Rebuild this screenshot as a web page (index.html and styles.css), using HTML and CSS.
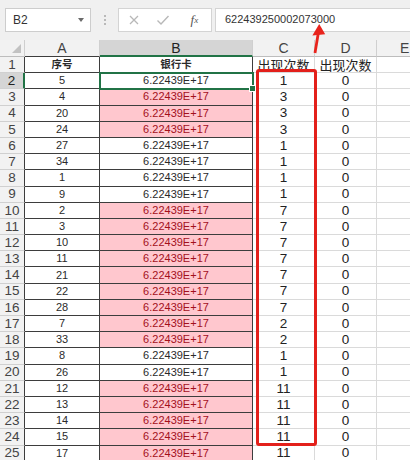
FILE: index.html
```html
<!DOCTYPE html>
<html lang="zh">
<head>
<meta charset="utf-8">
<link rel="stylesheet" href="styles.css">
</head>
<body>
<div class="toolbar">
  <div class="namebox"><span>B2</span><span class="caret"></span></div>
  <div class="sep"><i></i><i></i><i></i></div>
  <div class="fbtns">
    <span class="btn"><svg width="12" height="12" viewBox="0 0 12 12"><path d="M2 2L10 10M10 2L2 10" stroke="#b8b8b8" stroke-width="1.3" fill="none"/></svg></span>
    <span class="btn"><svg width="14" height="12" viewBox="0 0 14 12"><path d="M1.5 6.5L5 10L12.5 2" stroke="#b8b8b8" stroke-width="1.4" fill="none"/></svg></span>
    <span class="btn fx">f<sub>x</sub></span>
  </div>
  <div class="fbar">622439250002073000</div>
</div>

<div class="sheet">
  <div class="c corner"><span class="tri"></span></div>
  <div class="c ch cha">A</div>
  <div class="c ch sel">B</div>
  <div class="c ch">C</div>
  <div class="c ch">D</div>
  <div class="c ch che">E</div>

  <div class="c rh">1</div><div class="c a hd">序号</div><div class="c b hd">银行卡</div><div class="c cc cjk">出现次数</div><div class="c dd cjk">出现次数</div><div class="c ee"></div>
  <div class="c rh rsel">2</div><div class="c a">5</div><div class="c b active">6.22439E+17</div><div class="c cc">1</div><div class="c dd">0</div><div class="c ee"></div>
  <div class="c rh">3</div><div class="c a">4</div><div class="c b pk">6.22439E+17</div><div class="c cc">3</div><div class="c dd">0</div><div class="c ee"></div>
  <div class="c rh">4</div><div class="c a">20</div><div class="c b pk">6.22439E+17</div><div class="c cc">3</div><div class="c dd">0</div><div class="c ee"></div>
  <div class="c rh">5</div><div class="c a">24</div><div class="c b pk">6.22439E+17</div><div class="c cc">3</div><div class="c dd">0</div><div class="c ee"></div>
  <div class="c rh">6</div><div class="c a">27</div><div class="c b">6.22439E+17</div><div class="c cc">1</div><div class="c dd">0</div><div class="c ee"></div>
  <div class="c rh">7</div><div class="c a">34</div><div class="c b">6.22439E+17</div><div class="c cc">1</div><div class="c dd">0</div><div class="c ee"></div>
  <div class="c rh">8</div><div class="c a">1</div><div class="c b">6.22439E+17</div><div class="c cc">1</div><div class="c dd">0</div><div class="c ee"></div>
  <div class="c rh">9</div><div class="c a">9</div><div class="c b">6.22439E+17</div><div class="c cc">1</div><div class="c dd">0</div><div class="c ee"></div>
  <div class="c rh">10</div><div class="c a">2</div><div class="c b pk">6.22439E+17</div><div class="c cc">7</div><div class="c dd">0</div><div class="c ee"></div>
  <div class="c rh">11</div><div class="c a">3</div><div class="c b pk">6.22439E+17</div><div class="c cc">7</div><div class="c dd">0</div><div class="c ee"></div>
  <div class="c rh">12</div><div class="c a">10</div><div class="c b pk">6.22439E+17</div><div class="c cc">7</div><div class="c dd">0</div><div class="c ee"></div>
  <div class="c rh">13</div><div class="c a">11</div><div class="c b pk">6.22439E+17</div><div class="c cc">7</div><div class="c dd">0</div><div class="c ee"></div>
  <div class="c rh">14</div><div class="c a">21</div><div class="c b pk">6.22439E+17</div><div class="c cc">7</div><div class="c dd">0</div><div class="c ee"></div>
  <div class="c rh">15</div><div class="c a">22</div><div class="c b pk">6.22439E+17</div><div class="c cc">7</div><div class="c dd">0</div><div class="c ee"></div>
  <div class="c rh">16</div><div class="c a">28</div><div class="c b pk">6.22439E+17</div><div class="c cc">7</div><div class="c dd">0</div><div class="c ee"></div>
  <div class="c rh">17</div><div class="c a">7</div><div class="c b pk">6.22439E+17</div><div class="c cc">2</div><div class="c dd">0</div><div class="c ee"></div>
  <div class="c rh">18</div><div class="c a">33</div><div class="c b pk">6.22439E+17</div><div class="c cc">2</div><div class="c dd">0</div><div class="c ee"></div>
  <div class="c rh">19</div><div class="c a">8</div><div class="c b">6.22439E+17</div><div class="c cc">1</div><div class="c dd">0</div><div class="c ee"></div>
  <div class="c rh">20</div><div class="c a">26</div><div class="c b">6.22439E+17</div><div class="c cc">1</div><div class="c dd">0</div><div class="c ee"></div>
  <div class="c rh">21</div><div class="c a">12</div><div class="c b pk">6.22439E+17</div><div class="c cc">11</div><div class="c dd">0</div><div class="c ee"></div>
  <div class="c rh">22</div><div class="c a">13</div><div class="c b pk">6.22439E+17</div><div class="c cc">11</div><div class="c dd">0</div><div class="c ee"></div>
  <div class="c rh">23</div><div class="c a">14</div><div class="c b pk">6.22439E+17</div><div class="c cc">11</div><div class="c dd">0</div><div class="c ee"></div>
  <div class="c rh">24</div><div class="c a">15</div><div class="c b pk">6.22439E+17</div><div class="c cc">11</div><div class="c dd">0</div><div class="c ee"></div>
  <div class="c rh">25</div><div class="c a">17</div><div class="c b pk">6.22439E+17</div><div class="c cc">11</div><div class="c dd">0</div><div class="c ee"></div>
</div>

<div class="redbox"></div>
<svg class="arrow" width="30" height="40" viewBox="0 0 30 40">
  <path d="M10 33L13.3 13" stroke="#e8231c" stroke-width="2.8" fill="none"/>
  <path d="M14.2 4L7.4 15.6L20.2 14.2Z" fill="#e8231c"/>
</svg>
</body>
</html>
```

FILE: styles.css
```css
html, body {
  margin: 0;
  padding: 0;
}
body {
  width: 410px;
  height: 460px;
  overflow: hidden;
  background: #fff;
  position: relative;
  font-family: "Liberation Sans", Arial, "Noto Sans CJK SC", sans-serif;
}

/* ---------- toolbar ---------- */
.toolbar {
  height: 40px;
  box-sizing: border-box;
  padding-top: 8px;
  background: #f0f0f0;
  display: flex;
  align-items: flex-start;
}
.namebox {
  margin-left: 5px;
  width: 86px;
  height: 24px;
  box-sizing: border-box;
  border: 1px solid #cdcdcd;
  background: #fff;
  display: flex;
  align-items: center;
  justify-content: space-between;
  padding: 0 6px 0 7px;
  font-size: 12px;
  color: #333;
}
.caret {
  width: 0;
  height: 0;
  border-left: 3.5px solid transparent;
  border-right: 3.5px solid transparent;
  border-top: 4px solid #6a6a6a;
}
.sep {
  width: 27px;
  height: 24px;
  display: flex;
  flex-direction: column;
  align-items: center;
  justify-content: center;
  gap: 2px;
}
.sep i {
  display: block;
  width: 2px;
  height: 2px;
  background: #b9b9b9;
}
.fbtns {
  width: 94px;
  height: 24px;
  box-sizing: border-box;
  border: 1px solid #d4d4d4;
  background: #fff;
  display: flex;
  align-items: center;
}
.btn {
  width: 30px;
  display: flex;
  justify-content: center;
  align-items: center;
}
.btn.fx {
  width: 34px;
  font-family: "Liberation Serif", "Times New Roman", serif;
  font-style: italic;
  font-size: 13px;
  color: #555;
}
.btn.fx sub {
  font-size: 9px;
  vertical-align: -2px;
}
.fbar {
  margin-left: 3px;
  flex: 1;
  height: 24px;
  box-sizing: border-box;
  border: 1px solid #d4d4d4;
  border-right: none;
  background: #fff;
  padding-left: 9px;
  font-size: 11px;
  line-height: 21px;
  color: #333;
}

/* ---------- sheet ---------- */
.sheet {
  display: grid;
  width: 410px;
  grid-template-columns: 25px 75px 153px 62px 62px 33px;
  grid-template-rows: 17px repeat(25, 16.2px);
}
.c {
  box-sizing: border-box;
  border-right: 1px solid #dadada;
  border-bottom: 1px solid #dadada;
  display: flex;
  align-items: center;
  justify-content: center;
  white-space: nowrap;
  line-height: 1;
  color: #222;
}
.corner {
  background: #f2f2f2;
  border-right-color: #cfcfcf;
  border-bottom-color: #bdbdbd;
  justify-content: flex-end;
  align-items: flex-end;
  padding: 0 3px 3px 0;
}
.tri {
  width: 0;
  height: 0;
  border-left: 9px solid transparent;
  border-bottom: 9px solid #c2c2c2;
}
.ch {
  background: #f2f2f2;
  border-right-color: #d0d0d0;
  border-bottom-color: #bdbdbd;
  font-size: 14px;
  color: #444;
}
.ch.che {
  justify-content: flex-start;
  padding-left: 23px;
  border-right: none;
}
.ch.cha {
  border-bottom-color: #3d3d3d;
}
.ch.sel {
  background: #d5d5d5;
  color: #222;
  border-bottom: 2px solid #217346;
}
.rh {
  background: #f2f2f2;
  border-bottom-color: #d0d0d0;
  border-right: 1px solid #3d3d3d;
  font-size: 13.5px;
  color: #444;
}
.rh.rsel {
  background: #d5d5d5;
  color: #222;
  border-right: 2px solid #217346;
}
.a, .b {
  border-right-color: #3d3d3d;
  border-bottom-color: #3d3d3d;
  font-size: 11px;
  color: #2a2a2a;
}
.ee {
  border-right: none;
}
.hd {
  font-family: "Noto Sans CJK SC", sans-serif;
  font-weight: bold;
  font-size: 10.5px;
}
.pk {
  background: #ffc7ce;
  color: #a3101c;
}
.cc, .dd {
  font-size: 13.5px;
  color: #222;
}
.cjk {
  font-family: "Noto Sans CJK SC", sans-serif;
  font-size: 13px;
}
.active {
  position: relative;
  z-index: 2;
  outline: 2px solid #217346;
  outline-offset: -1px;
}
.active::after {
  content: "";
  position: absolute;
  right: -4px;
  bottom: -4px;
  width: 5px;
  height: 5px;
  background: #217346;
  border: 1px solid #fff;
}

/* ---------- annotations ---------- */
.redbox {
  position: absolute;
  left: 256px;
  top: 69px;
  width: 61px;
  height: 377px;
  box-sizing: border-box;
  border: 3px solid #e3201b;
  border-radius: 3px;
}
.arrow {
  position: absolute;
  left: 305px;
  top: 20px;
}
```
